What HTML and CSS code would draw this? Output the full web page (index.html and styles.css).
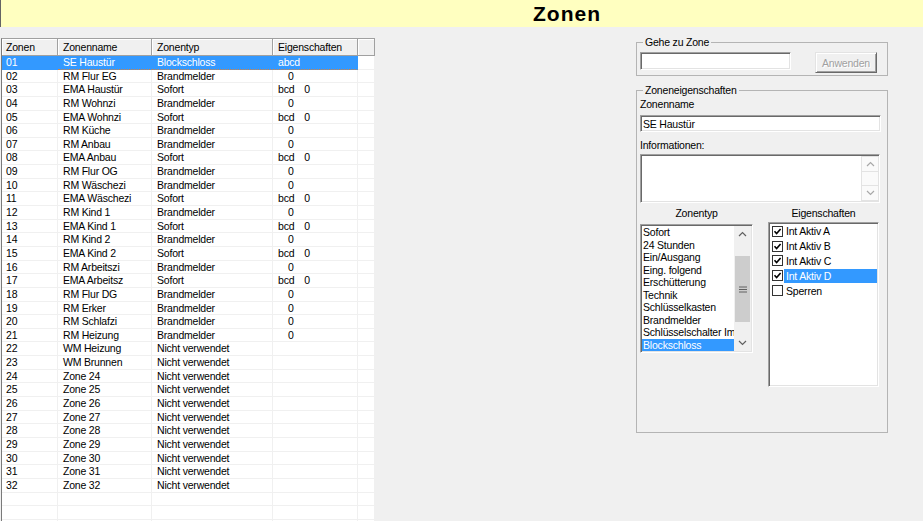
FILE: index.html
```html
<!DOCTYPE html>
<html>
    <head>
        <meta charset="utf-8">
        <link rel="stylesheet" href="styles.css">
        <title>Zonen</title>
    </head>
    <body>
        <div class="titlebar"><h1>Zonen</h1></div>

        <div class="main">
            <div class="zone-list">
                <div class="row head"><div>Zonen</div><div>Zonenname</div><div>Zonentyp</div><div>Eigenschaften</div><div></div></div>
                <div class="row selected"><div>01</div><div>SE Haustür</div><div>Blockschloss</div><div>abcd</div><div></div></div>
                <div class="row"><div>02</div><div>RM Flur EG</div><div>Brandmelder</div><div><span class="lvl">0</span></div><div></div></div>
                <div class="row"><div>03</div><div>EMA Haustür</div><div>Sofort</div><div>bcd<span class="lvl-b">0</span></div><div></div></div>
                <div class="row"><div>04</div><div>RM Wohnzi</div><div>Brandmelder</div><div><span class="lvl">0</span></div><div></div></div>
                <div class="row"><div>05</div><div>EMA Wohnzi</div><div>Sofort</div><div>bcd<span class="lvl-b">0</span></div><div></div></div>
                <div class="row"><div>06</div><div>RM Küche</div><div>Brandmelder</div><div><span class="lvl">0</span></div><div></div></div>
                <div class="row"><div>07</div><div>RM Anbau</div><div>Brandmelder</div><div><span class="lvl">0</span></div><div></div></div>
                <div class="row"><div>08</div><div>EMA Anbau</div><div>Sofort</div><div>bcd<span class="lvl-b">0</span></div><div></div></div>
                <div class="row"><div>09</div><div>RM Flur OG</div><div>Brandmelder</div><div><span class="lvl">0</span></div><div></div></div>
                <div class="row"><div>10</div><div>RM Wäschezi</div><div>Brandmelder</div><div><span class="lvl">0</span></div><div></div></div>
                <div class="row"><div>11</div><div>EMA Wäschezi</div><div>Sofort</div><div>bcd<span class="lvl-b">0</span></div><div></div></div>
                <div class="row"><div>12</div><div>RM Kind 1</div><div>Brandmelder</div><div><span class="lvl">0</span></div><div></div></div>
                <div class="row"><div>13</div><div>EMA Kind 1</div><div>Sofort</div><div>bcd<span class="lvl-b">0</span></div><div></div></div>
                <div class="row"><div>14</div><div>RM Kind 2</div><div>Brandmelder</div><div><span class="lvl">0</span></div><div></div></div>
                <div class="row"><div>15</div><div>EMA Kind 2</div><div>Sofort</div><div>bcd<span class="lvl-b">0</span></div><div></div></div>
                <div class="row"><div>16</div><div>RM Arbeitszi</div><div>Brandmelder</div><div><span class="lvl">0</span></div><div></div></div>
                <div class="row"><div>17</div><div>EMA Arbeitsz</div><div>Sofort</div><div>bcd<span class="lvl-b">0</span></div><div></div></div>
                <div class="row"><div>18</div><div>RM Flur DG</div><div>Brandmelder</div><div><span class="lvl">0</span></div><div></div></div>
                <div class="row"><div>19</div><div>RM Erker</div><div>Brandmelder</div><div><span class="lvl">0</span></div><div></div></div>
                <div class="row"><div>20</div><div>RM Schlafzi</div><div>Brandmelder</div><div><span class="lvl">0</span></div><div></div></div>
                <div class="row"><div>21</div><div>RM Heizung</div><div>Brandmelder</div><div><span class="lvl">0</span></div><div></div></div>
                <div class="row"><div>22</div><div>WM Heizung</div><div>Nicht verwendet</div><div></div><div></div></div>
                <div class="row"><div>23</div><div>WM Brunnen</div><div>Nicht verwendet</div><div></div><div></div></div>
                <div class="row"><div>24</div><div>Zone 24</div><div>Nicht verwendet</div><div></div><div></div></div>
                <div class="row"><div>25</div><div>Zone 25</div><div>Nicht verwendet</div><div></div><div></div></div>
                <div class="row"><div>26</div><div>Zone 26</div><div>Nicht verwendet</div><div></div><div></div></div>
                <div class="row"><div>27</div><div>Zone 27</div><div>Nicht verwendet</div><div></div><div></div></div>
                <div class="row"><div>28</div><div>Zone 28</div><div>Nicht verwendet</div><div></div><div></div></div>
                <div class="row"><div>29</div><div>Zone 29</div><div>Nicht verwendet</div><div></div><div></div></div>
                <div class="row"><div>30</div><div>Zone 30</div><div>Nicht verwendet</div><div></div><div></div></div>
                <div class="row"><div>31</div><div>Zone 31</div><div>Nicht verwendet</div><div></div><div></div></div>
                <div class="row"><div>32</div><div>Zone 32</div><div>Nicht verwendet</div><div></div><div></div></div>
                <div class="row"><div></div><div></div><div></div><div></div><div></div></div>
                <div class="row"><div></div><div></div><div></div><div></div><div></div></div>
                <div class="row"><div></div><div></div><div></div><div></div><div></div></div>
            </div>

            <div class="side">
                <fieldset class="group goto">
                    <legend>Gehe zu Zone</legend>
                    <div class="goto-row">
                        <input class="field goto-input">
                        <button class="btn" disabled>Anwenden</button>
                    </div>
                </fieldset>

                <fieldset class="group props">
                    <legend>Zoneneigenschaften</legend>
                    <div class="label">Zonenname</div>
                    <input class="field name-input" value="SE Haustür">
                    <div class="label info-label">Informationen:</div>
                    <div class="field memo">
                        <div class="vscroll disabled">
                            <div class="sb-btn"><svg width="9" height="6" viewBox="0 0 9 6"><polyline points="1,5 4.5,1.5 8,5" fill="none" stroke="#a8a8a8" stroke-width="1.2"/></svg></div>
                            <div class="sb-track"></div>
                            <div class="sb-btn"><svg width="9" height="6" viewBox="0 0 9 6"><polyline points="1,1 4.5,4.5 8,1" fill="none" stroke="#a8a8a8" stroke-width="1.2"/></svg></div>
                        </div>
                    </div>

                    <div class="cols">
                        <div class="col type-col">
                            <div class="caption">Zonentyp</div>
                            <div class="field listbox typelist">
                                <div class="items">
                                    <div class="item">Sofort</div>
                                    <div class="item">24 Stunden</div>
                                    <div class="item">Ein/Ausgang</div>
                                    <div class="item">Eing. folgend</div>
                                    <div class="item">Erschütterung</div>
                                    <div class="item">Technik</div>
                                    <div class="item">Schlüsselkasten</div>
                                    <div class="item">Brandmelder</div>
                                    <div class="item">Schlüsselschalter Im</div>
                                    <div class="item is-selected">Blockschloss</div>
                                </div>
                                <div class="vscroll">
                                    <div class="sb-btn"><svg width="9" height="6" viewBox="0 0 9 6"><polyline points="1,5 4.5,1.5 8,5" fill="none" stroke="#606060" stroke-width="1.2"/></svg></div>
                                    <div class="sb-thumb"><svg width="8" height="7" viewBox="0 0 8 7"><path d="M0 1H8M0 3.5H8M0 6H8" stroke="#606060" stroke-width="1"/></svg></div>
                                    <div class="sb-btn sb-down"><svg width="9" height="6" viewBox="0 0 9 6"><polyline points="1,1 4.5,4.5 8,1" fill="none" stroke="#606060" stroke-width="1.2"/></svg></div>
                                </div>
                            </div>
                        </div>
                        <div class="col prop-col">
                            <div class="caption">Eigenschaften</div>
                            <div class="field listbox checklist">
                                <div class="check-item"><span class="box checked"><svg width="9" height="9" viewBox="0 0 9 9"><path d="M1.5 4.3L3.6 6.5L7.6 2" fill="none" stroke="#000" stroke-width="1.6"/></svg></span><span class="text">Int Aktiv A</span></div>
                                <div class="check-item"><span class="box checked"><svg width="9" height="9" viewBox="0 0 9 9"><path d="M1.5 4.3L3.6 6.5L7.6 2" fill="none" stroke="#000" stroke-width="1.6"/></svg></span><span class="text">Int Aktiv B</span></div>
                                <div class="check-item"><span class="box checked"><svg width="9" height="9" viewBox="0 0 9 9"><path d="M1.5 4.3L3.6 6.5L7.6 2" fill="none" stroke="#000" stroke-width="1.6"/></svg></span><span class="text">Int Aktiv C</span></div>
                                <div class="check-item"><span class="box checked"><svg width="9" height="9" viewBox="0 0 9 9"><path d="M1.5 4.3L3.6 6.5L7.6 2" fill="none" stroke="#000" stroke-width="1.6"/></svg></span><span class="text is-selected">Int Aktiv D</span></div>
                                <div class="check-item"><span class="box"></span><span class="text">Sperren</span></div>
                            </div>
                        </div>
                    </div>
                </fieldset>
            </div>
        </div>
    </body>
</html>
```

FILE: styles.css
```css
html, body {
    margin: 0;
    height: 100%;
    overflow: hidden;
}

body {
    background-color: #f0f0f0;
    font-family: "Liberation Sans", Arial, sans-serif;
    font-size: 10.5px;
    letter-spacing: -0.2px;
    color: #000;
}

.titlebar {
    height: 27px;
    background-color: #ffffc0;
    border-left: 1px solid #646464;
    padding-left: 210px;
    text-align: center;
}

.titlebar h1 {
    margin: 0;
    font-size: 21px;
    line-height: 27px;
    letter-spacing: 1px;
}

.main {
    display: flex;
    align-items: flex-start;
    padding-top: 9px;
}

/* list view */

.zone-list {
    margin: 2px 0 0 1px;
    width: 373px;
    height: 500px;
    background-color: white;
    border-left: 1px solid #7a7a7a;
    border-top: 1px solid #a0a0a0;
}

.row {
    display: grid;
    grid-template-columns: 56px 94px 121px 85px 17px;
    height: 13.65px;
    line-height: 12px;
}

.row > div {
    border-right: 1px solid #f0f0f0;
    border-bottom: 1px solid #f0f0f0;
    padding-left: 5px;
    white-space: nowrap;
    overflow: hidden;
}

.row > div:first-child {
    padding-left: 4px;
}

.head {
    height: 17px;
    background-color: #f0f0f0;
}

.head > div {
    border-right: 1px solid #a0a0a0;
    border-bottom: 1px solid #a0a0a0;
    box-shadow: inset 1px 1px 0 white;
    line-height: 16px;
}

.selected > div:nth-child(-n+4) {
    background-color: #3399ff;
    border-color: #3399ff;
    color: white;
}

.selected > div:nth-child(n+2):nth-child(-n+4) {
    border-bottom: 1px dotted #d9823b;
}

.lvl {
    padding-left: 10px;
}

.lvl-b {
    margin-left: 10px;
}

/* right side */

.side {
    margin-left: 261px;
    width: 252px;
}

.group {
    margin: 0;
    min-width: 0;
    border: 1px solid #b4b4b4;
}

.group legend {
    padding: 0 2px;
    margin-left: 3px;
    line-height: 13px;
}

.goto {
    padding: 3px 3px 2px;
}

.goto-row {
    display: flex;
    align-items: flex-start;
}

.field {
    box-sizing: border-box;
    background-color: white;
    border: 1px solid;
    border-color: #a0a0a0 white white #a0a0a0;
    box-shadow: inset 1px 1px 0 #696969, inset -1px -1px 0 #e3e3e3;
}

input.field {
    font: inherit;
    letter-spacing: inherit;
    padding: 0 2px;
    outline: none;
}

.goto-input {
    width: 151px;
    height: 18px;
}

.btn {
    margin-left: 24px;
    width: 62px;
    height: 21px;
    padding: 0;
    font: inherit;
    letter-spacing: inherit;
    color: #a0a0a0;
    text-shadow: 1px 1px 0 white;
    background-color: #f0f0f0;
    border: 1px solid;
    border-color: #e3e3e3 #696969 #696969 #e3e3e3;
    box-shadow: inset 1px 1px 0 white, inset -1px -1px 0 #a0a0a0;
}

.props {
    margin-top: 8px;
    padding: 1px 3px 45px;
}

.label {
    line-height: 13px;
}

.name-input {
    display: block;
    margin-top: 4px;
    width: 241px;
    height: 17px;
}

.info-label {
    margin-top: 7px;
}

.memo {
    margin-top: 2px;
    width: 240px;
    height: 49px;
    display: flex;
    justify-content: flex-end;
    padding: 1px;
}

.vscroll {
    width: 17px;
    display: flex;
    flex-direction: column;
    background-color: #f0f0f0;
}

.vscroll.disabled {
    width: 16px;
    background-color: #fafafa;
    border-left: 1px solid #e3e3e3;
}

.sb-btn {
    height: 16px;
    display: flex;
    align-items: center;
    justify-content: center;
    flex: none;
}

.disabled .sb-btn {
    border-top: 1px solid #e3e3e3;
    border-bottom: 1px solid #e3e3e3;
    box-sizing: border-box;
}

.sb-track {
    flex: 1;
}

.sb-thumb {
    margin: 14px 1px 0;
    height: 66px;
    background-color: #cdcdcd;
    display: flex;
    align-items: center;
    justify-content: center;
}

.sb-down {
    margin-top: auto;
}

.cols {
    display: flex;
    gap: 15px;
    margin-top: 4px;
}

.caption {
    text-align: center;
    line-height: 13px;
}

.type-col {
    width: 113px;
}

.prop-col {
    width: 111px;
}

.listbox {
    padding: 1px;
}

.typelist {
    margin-top: 4px;
    height: 129px;
    display: flex;
}

.items {
    flex: 1;
    min-width: 0;
    overflow: hidden;
}

.item {
    height: 12.5px;
    line-height: 12.5px;
    padding-left: 1px;
    white-space: nowrap;
}

.is-selected {
    background-color: #3399ff;
    color: white;
}

.checklist {
    margin-top: 2px;
    height: 165px;
}

.check-item {
    display: flex;
    align-items: center;
    height: 14.8px;
    padding-left: 2px;
}

.box {
    box-sizing: border-box;
    width: 11px;
    height: 11px;
    border: 1px solid #333;
    background-color: white;
    display: flex;
    align-items: center;
    justify-content: center;
    flex: none;
}

.check-item .text {
    flex: 1;
    margin-left: 1px;
    padding-left: 2px;
    line-height: 14px;
}
```
